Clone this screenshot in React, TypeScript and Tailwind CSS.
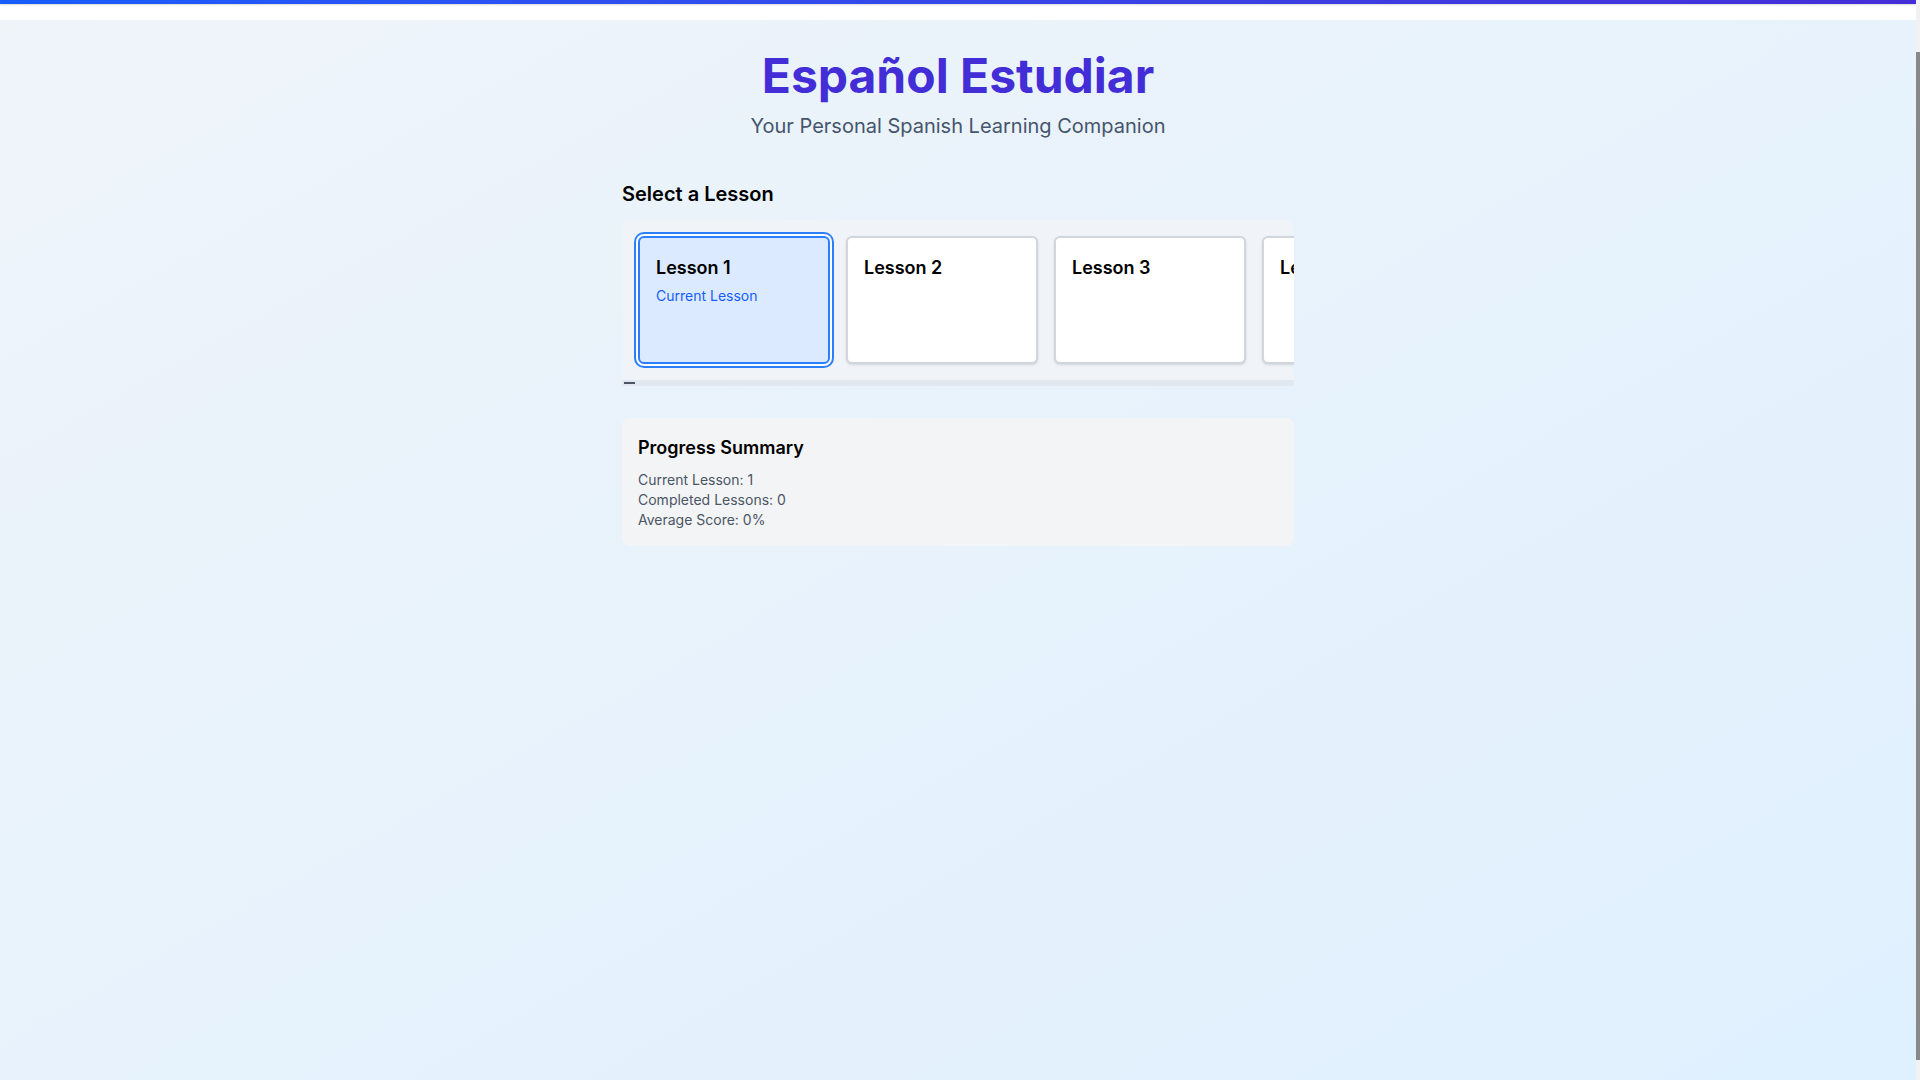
import React from "react";

const lessons = Array.from({ length: 8 }, (_, i) => i + 1);

export default function App() {
  return (
    <div className="flex h-screen overflow-hidden font-['Inter','Noto_Sans',sans-serif]">
      <div className="flex min-w-0 flex-1 flex-col bg-gradient-to-br from-[#eff4f9] to-[#dff0fe]">
        <div className="h-5 shrink-0 bg-white">
          <div className="h-1 bg-gradient-to-r from-blue-600 to-indigo-700 shadow-[0_1px_2px_rgba(0,0,0,0.15)]" />
        </div>

        <div className="flex-1 pt-8">
          <header className="mb-10 text-center">
            <h1 className="mb-3 text-5xl font-bold text-indigo-700">Español Estudiar</h1>
            <p className="text-xl text-slate-600">Your Personal Spanish Learning Companion</p>
          </header>

          <main className="mx-auto max-w-2xl">
            <h2 className="mb-3 text-xl font-semibold text-black">Select a Lesson</h2>

            <div className="mb-8 rounded-t-lg bg-[#f0f4f9]">
              <div className="flex gap-4 overflow-hidden p-4">
                {lessons.map((n) =>
                  n === 1 ? (
                    <div
                      key={n}
                      className="h-32 w-48 shrink-0 rounded-md border-2 border-blue-500 bg-blue-100 p-4 ring-2 ring-blue-500 ring-offset-2"
                    >
                      <h3 className="text-lg font-semibold text-black">Lesson {n}</h3>
                      <p className="mt-1 text-sm text-blue-600">Current Lesson</p>
                    </div>
                  ) : (
                    <div
                      key={n}
                      className="h-32 w-48 shrink-0 rounded-md border-2 border-gray-300 bg-white p-4 shadow-sm"
                    >
                      <h3 className="text-lg font-semibold text-black">Lesson {n}</h3>
                    </div>
                  )
                )}
              </div>
              <div className="h-[6px] bg-[#e2e8f0] p-[2px]">
                <div className="h-[2px] w-[11px] bg-[#4b5563]" />
              </div>
            </div>

            <section className="rounded-lg bg-gray-100 p-4">
              <h2 className="mb-2 text-lg font-semibold text-black">Progress Summary</h2>
              <p className="text-sm text-gray-600">Current Lesson: 1</p>
              <p className="text-sm text-gray-600">Completed Lessons: 0</p>
              <p className="text-sm text-gray-600">Average Score: 0%</p>
            </section>
          </main>
        </div>
      </div>

      <div className="w-[4px] shrink-0 bg-[#f1f1f1] pt-[52px]">
        <div className="h-[1008px] bg-[#888888]" />
      </div>
    </div>
  );
}
